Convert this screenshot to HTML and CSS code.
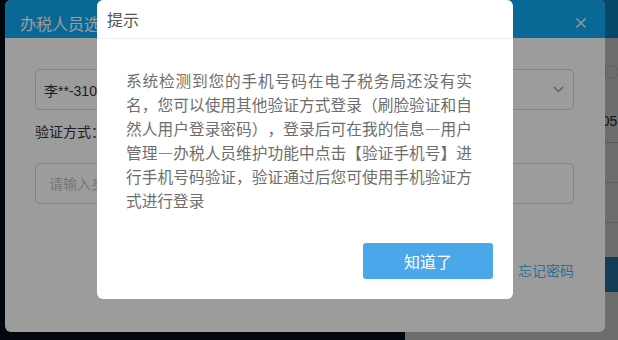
FILE: index.html
```html
<!DOCTYPE html>
<html lang="zh-CN">
<head>
    <meta charset="UTF-8">
    <meta name="viewport" content="width=device-width, initial-scale=1.0">
    <title>电子税务局 - 提示</title>
    <link rel="stylesheet" href="styles.css">
</head>
<body>
    <!-- Login page behind the dialogs -->
    <div class="login-card">
        <div class="login-head"></div>
        <div class="login-body">
            <span class="login-radio"></span>
            <div class="login-account">138****2105</div>
            <div class="login-line"></div>
            <div class="login-line"></div>
            <div class="login-btn"></div>
        </div>
    </div>

    <div class="shade shade-low"></div>

    <!-- Taxpayer picker dialog -->
    <div class="layer layer-pick">
        <div class="pick-title">
            <span>办税人员选</span>
            <svg class="pick-close" width="12" height="12" viewBox="0 0 12 12">
                <path d="M1.5 1.5 L10.5 10.5 M10.5 1.5 L1.5 10.5" stroke="#fff" stroke-width="1.6" fill="none"/>
            </svg>
        </div>
        <div class="pick-body">
            <div class="pick-select">
                <span>李**-3101</span>
                <svg width="11" height="7" viewBox="0 0 11 7">
                    <path d="M1 1 L5.5 5.5 L10 1" stroke="#999" stroke-width="1.4" fill="none"/>
                </svg>
            </div>
            <div class="pick-label">验证方式：</div>
            <div class="pick-input">请输入身份</div>
            <div class="pick-foot">
                <a class="pick-forget" href="#">忘记密码</a>
            </div>
        </div>
    </div>

    <div class="shade shade-high"></div>

    <!-- Tip dialog -->
    <div class="layer layer-tip">
        <div class="tip-title">提示</div>
        <div class="tip-body">系统检测到您的手机号码在电子税务局还没有实名，您可以使用其他验证方式登录（刷脸验证和自然人用户登录密码），登录后可在我的信息—用户管理—办税人员维护功能中点击【验证手机号】进行手机号码验证，验证通过后您可使用手机验证方式进行登录</div>
        <div class="tip-foot">
            <button class="tip-btn">知道了</button>
        </div>
    </div>
</body>
</html>
```

FILE: styles.css
```css
* {
    margin: 0;
    padding: 0;
    box-sizing: border-box;
}

body {
    width: 618px;
    height: 340px;
    overflow: hidden;
    position: relative;
    background-color: #061420;
    font-family: "Liberation Sans", "Noto Sans CJK SC", sans-serif;
    text-spacing-trim: space-all;
}

/* page behind */
.login-card {
    position: absolute;
    left: 405px;
    top: 0;
    width: 213px;
    height: 340px;
    overflow: hidden;
    background-color: #fff;
}

.login-head {
    height: 38px;
    background-color: #11aaf6;
}

.login-body {
    display: flex;
    flex-direction: column;
    padding-left: 130px;
}

.login-radio {
    width: 14px;
    height: 14px;
    margin: 27px 0 0 70px;
    border: 1px solid #ddd;
    border-radius: 50%;
}

.login-account {
    margin-top: 33px;
    padding: 0 0 12px 6px;
    border-bottom: 1px solid #ccc;
    font-size: 14px;
    line-height: 18px;
    color: #333;
    white-space: nowrap;
}

.login-line {
    height: 40px;
    border-bottom: 1px solid #ddd;
}

.login-btn {
    margin: 34px 0 0 -120px;
    height: 35px;
    background-color: #2b8fcf;
}

/* overlays */
.shade {
    position: absolute;
    left: 0;
    top: 0;
    width: 100%;
    height: 100%;
    background-color: #000;
}

.shade-low {
    opacity: 0.3;
}

.shade-high {
    opacity: 0.39;
}

.layer {
    position: absolute;
    background-color: #fff;
    border-radius: 6px;
    overflow: hidden;
}

/* picker dialog */
.layer-pick {
    left: 5px;
    top: 0;
    width: 600px;
    height: 332px;
}

.pick-title {
    height: 38px;
    background-color: #11aaf6;
    color: #fff;
    font-family: "Noto Sans CJK SC", sans-serif;
    font-size: 16px;
    line-height: 30px;
    padding: 8px 18px 0 15px;
    display: flex;
    align-items: center;
    justify-content: space-between;
}

.pick-close {
    opacity: 0.9;
}

.pick-body {
    padding: 31px 31px 0 30px;
}

.pick-select {
    height: 41px;
    border: 1px solid #d5d5d5;
    border-radius: 5px;
    padding: 0 9px 0 8px;
    display: flex;
    align-items: center;
    justify-content: space-between;
    font-size: 14px;
    color: #333;
}

.pick-label {
    margin-top: 11px;
    font-family: "Noto Sans CJK SC", sans-serif;
    font-size: 14px;
    line-height: 20px;
    color: #333;
}

.pick-input {
    margin-top: 22px;
    height: 41px;
    border: 1px solid #d5d5d5;
    border-radius: 5px;
    padding-left: 13px;
    font-family: "Noto Sans CJK SC", sans-serif;
    font-size: 14px;
    line-height: 39px;
    color: #c2c2c2;
}

.pick-foot {
    margin-top: 56px;
    text-align: right;
    line-height: 20px;
}

.pick-forget {
    font-family: "Noto Sans CJK SC", sans-serif;
    font-size: 14px;
    color: #4ab8ee;
    text-decoration: none;
}

/* tip dialog */
.layer-tip {
    left: 97px;
    top: 0;
    width: 416px;
    height: 299px;
    font-family: "Noto Sans CJK SC", sans-serif;
}

.tip-title {
    height: 39px;
    padding-left: 10px;
    border-bottom: 1px solid #eee;
    font-size: 16px;
    line-height: 38px;
    color: #555;
}

.tip-body {
    padding: 30px 41px 0 29px;
    font-size: 15.7px;
    line-height: 24px;
    color: #6e6e6e;
    text-align: justify;
}

.tip-foot {
    padding: 30px 20px 20px;
    display: flex;
    justify-content: flex-end;
}

.tip-btn {
    width: 130px;
    height: 36px;
    border: none;
    border-radius: 3px;
    background-color: #4aa8ea;
    color: #fff;
    font-family: "Noto Sans CJK SC", sans-serif;
    font-size: 16px;
    cursor: pointer;
}
```
